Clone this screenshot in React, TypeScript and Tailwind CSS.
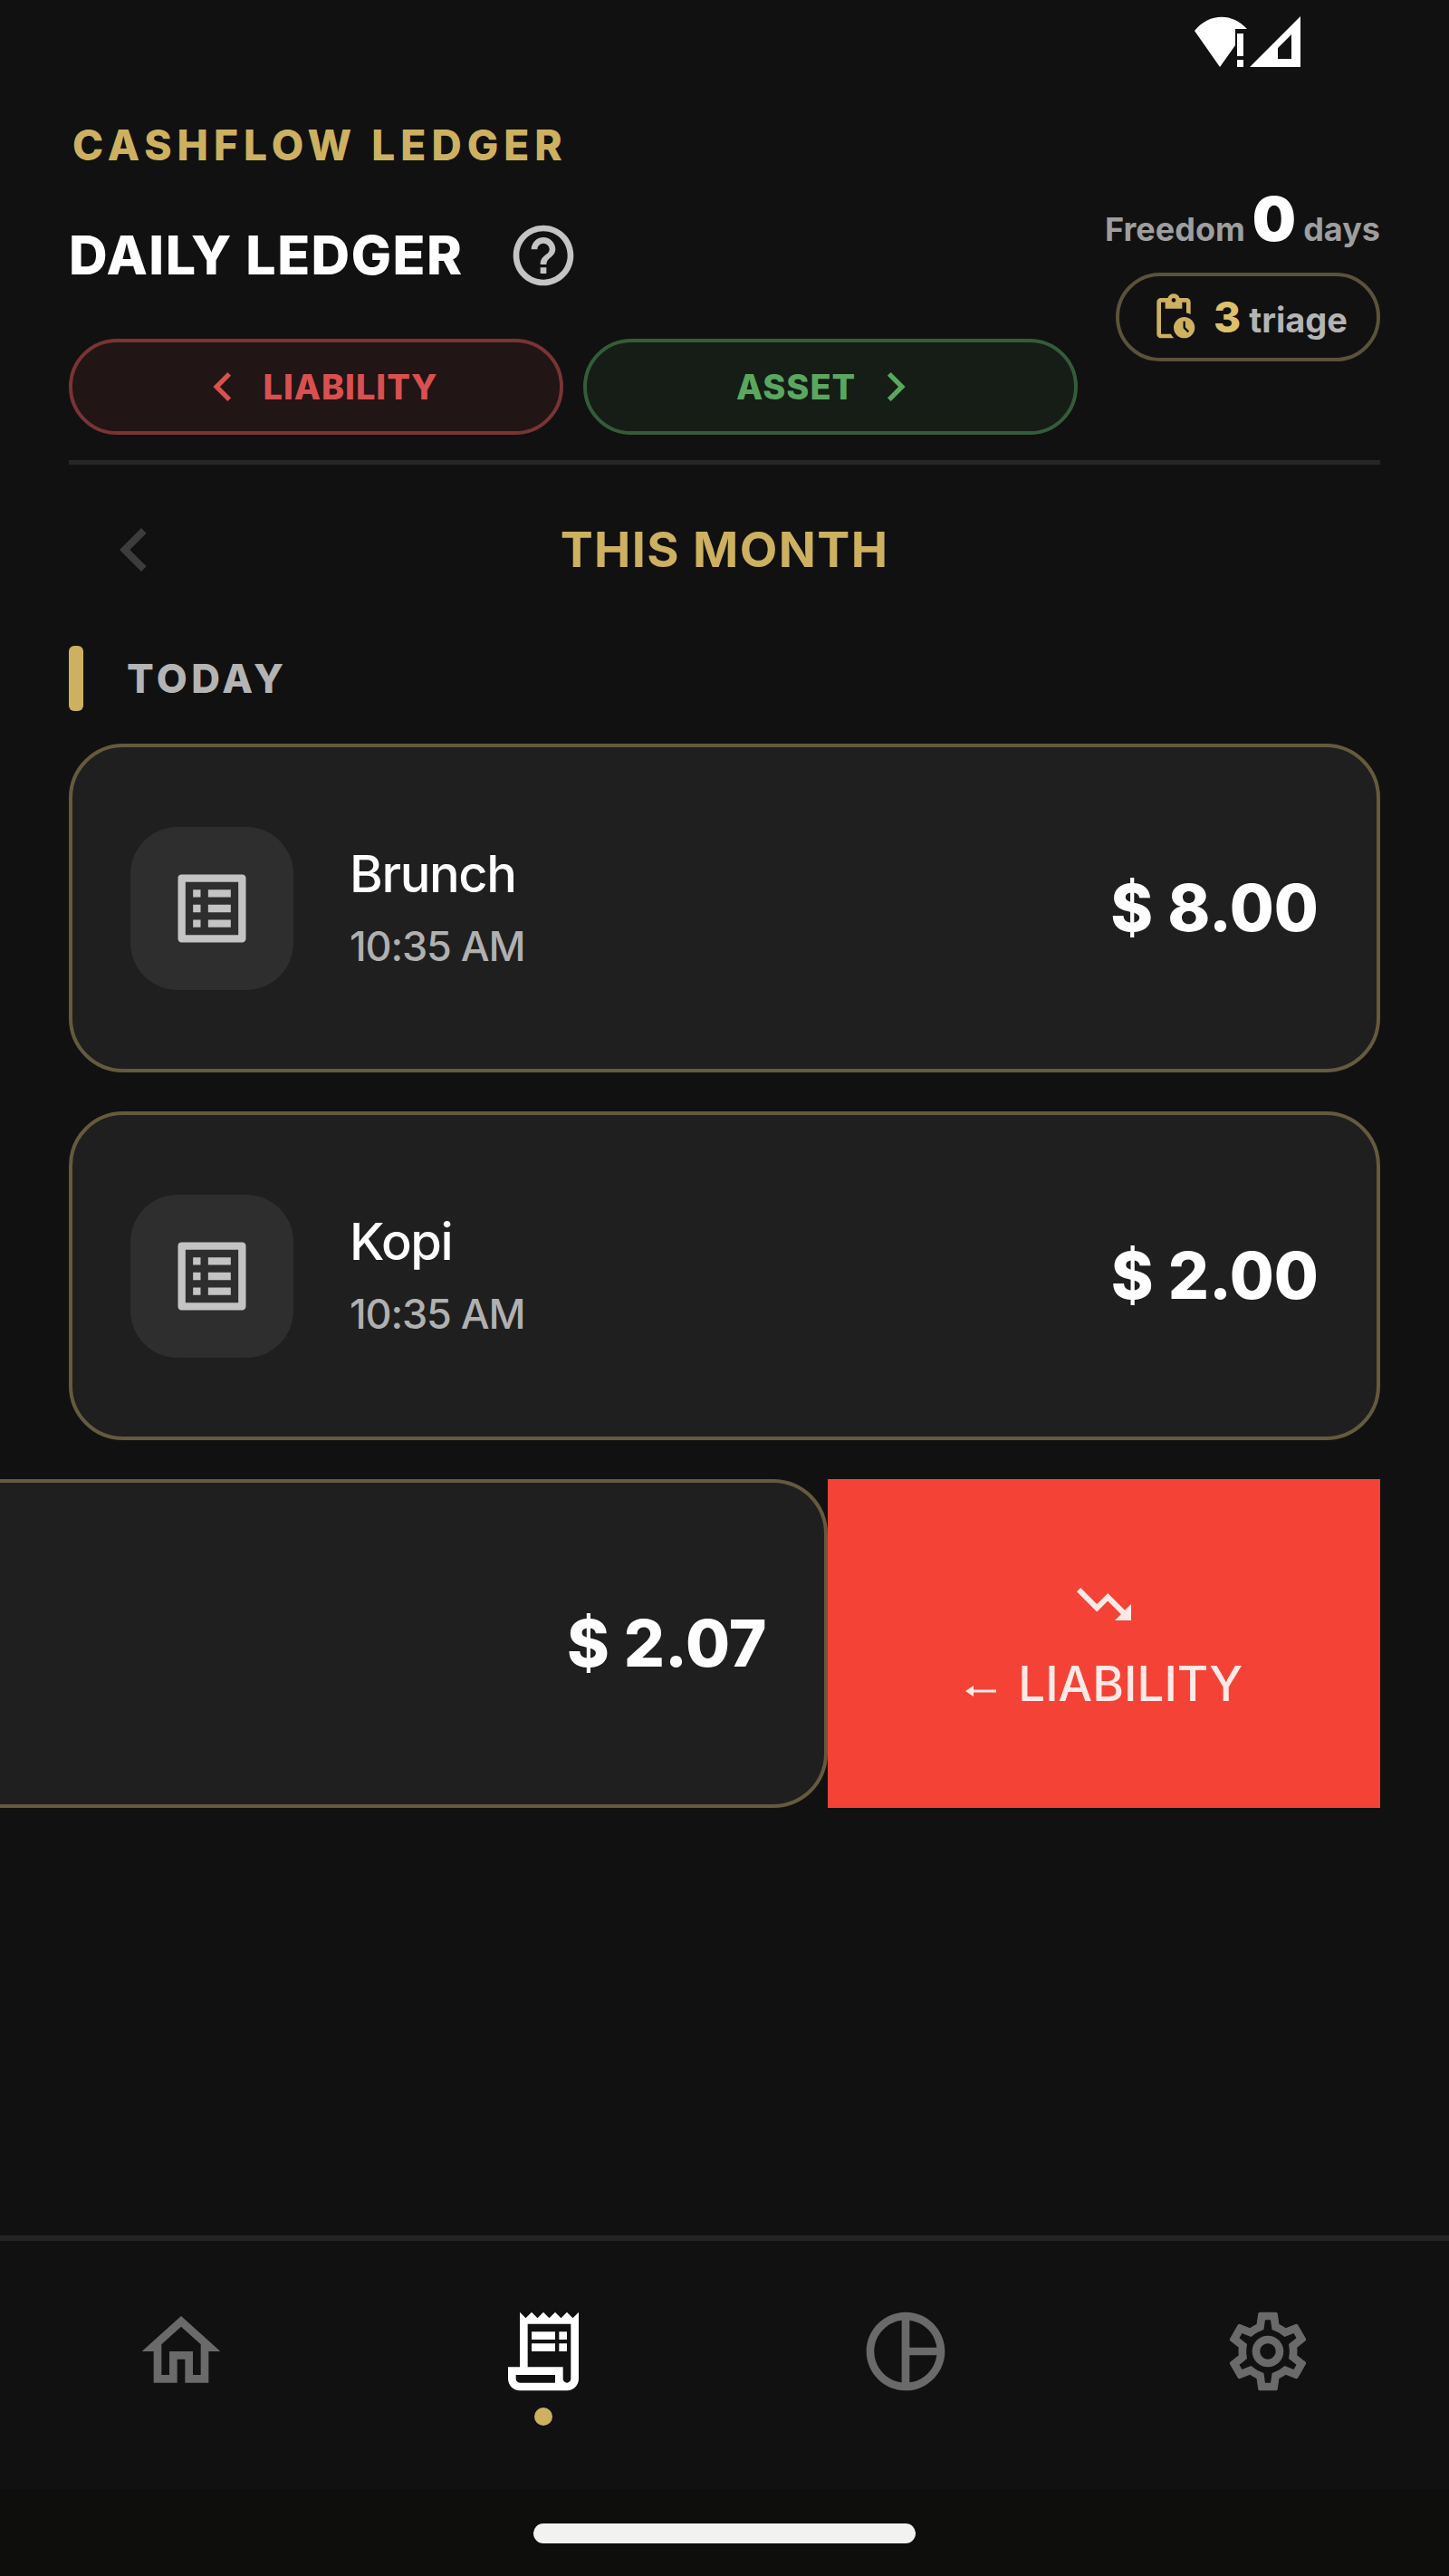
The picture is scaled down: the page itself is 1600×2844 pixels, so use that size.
import {
  MdChevronLeft,
  MdChevronRight,
  MdHelpOutline,
  MdListAlt,
  MdOutlineHome,
  MdOutlinePendingActions,
  MdOutlinePieChartOutline,
  MdOutlineReceiptLong,
  MdOutlineSettings,
  MdTrendingDown,
} from "react-icons/md";

const entries = [
  { name: "Brunch", time: "10:35 AM", amount: "8.00" },
  { name: "Kopi", time: "10:35 AM", amount: "2.00" },
];

const tabs = [
  { label: "Home", icon: MdOutlineHome, active: false },
  { label: "Ledger", icon: MdOutlineReceiptLong, active: true },
  { label: "Reports", icon: MdOutlinePieChartOutline, active: false },
  { label: "Settings", icon: MdOutlineSettings, active: false },
];

export default function App() {
  return (
    <div className="min-h-screen flex flex-col bg-[#111111] text-white font-['Inter',sans-serif] overflow-hidden">
      <StatusBar />

      <header className="mx-19 flex items-center gap-[30px] border-b-[5px] border-[#262626] pb-7">
        <div className="flex-1">
          <p className="pl-1 text-[46px] leading-[56px] font-extrabold tracking-[6px] text-[#cdb160]">CASHFLOW LEDGER</p>
          <div className="mt-[54px] flex items-center gap-12">
            <h1 className="text-[59px] leading-[72px] font-extrabold tracking-wide">DAILY LEDGER</h1>
            <button aria-label="Help" className="text-[#c4c4c4]">
              <MdHelpOutline className="size-20" />
            </button>
          </div>
          <div className="mt-[52px] flex gap-[22px]">
            <button className="flex-1 h-[106px] flex items-center justify-center gap-3 rounded-full border-4 border-[#7a3434] bg-[#211515] text-[38px] font-extrabold tracking-wide text-[#d9504f]">
              <MdChevronLeft className="size-16" />
              LIABILITY
            </button>
            <button className="flex-1 h-[106px] flex items-center justify-center gap-3 rounded-full border-4 border-[#345c3a] bg-[#151d16] text-[38px] font-extrabold tracking-wide text-[#5aa860]">
              ASSET
              <MdChevronRight className="size-16" />
            </button>
          </div>
        </div>

        <div className="flex flex-col items-end gap-2 pb-3">
          <p className="flex items-baseline gap-2 text-[36px] leading-[80px] font-bold text-[#9e9e9e]">
            Freedom
            <span className="text-[68px] font-black text-white">0</span>
            days
          </p>
          <button className="h-[98px] px-8 flex items-center gap-4 rounded-full border-4 border-[#5a523b] text-[38px] font-bold text-[#b4b4b4]">
            <MdOutlinePendingActions className="size-14 text-[#cdb160]" />
            <span>
              <span className="text-[46px] font-extrabold text-[#dcc06a]">3</span> triage
            </span>
          </button>
        </div>
      </header>

      <main className="flex-1 mx-19">
        <div className="mt-[46px] grid grid-cols-[144px_1fr_144px] items-center">
          <button aria-label="Previous month" className="justify-self-center text-[#3c3c3c]">
            <MdChevronLeft className="size-24" />
          </button>
          <h2 className="text-center text-[54px] leading-[72px] font-bold tracking-wide text-[#cdb160]">THIS MONTH</h2>
        </div>

        <div className="mt-[58px] flex items-center gap-12">
          <span className="w-4 h-[72px] rounded-md bg-[#cdb160]" />
          <h3 className="text-[44px] leading-[56px] font-extrabold tracking-widest text-[#b4b4b4]">TODAY</h3>
        </div>

        <ul className="mt-9 flex flex-col gap-[43px]">
          {entries.map((entry) => (
            <li
              key={entry.name}
              className="h-[363px] flex items-center rounded-[60px] border-4 border-[#645a3e] bg-[#1f1f1f] px-16"
            >
              <div className="size-45 flex items-center justify-center rounded-[52px] bg-[#2e2e2e]">
                <MdListAlt className="size-25 text-[#c4c4c4]" />
              </div>
              <div className="ml-[62px] flex-1 pt-1">
                <p className="text-[56px] leading-[72px] font-medium tracking-tight">{entry.name}</p>
                <p className="mt-2 text-[45px] leading-[72px] font-medium tracking-tight text-[#b0b0b0]">{entry.time}</p>
              </div>
              <Amount value={entry.amount} />
            </li>
          ))}

          {/* Entry dragged to the left, action revealed behind it */}
          <li className="-ml-19 flex h-[363px]">
            <div className="flex-1 flex items-center justify-end rounded-r-[60px] border-4 border-l-0 border-[#645a3e] bg-[#1f1f1f] px-16">
              <Amount value="2.07" />
            </div>
            <button className="w-[40%] flex flex-col items-center justify-center gap-5 bg-[#f44336] pb-1 text-[#ffe9e6]">
              <MdTrendingDown className="size-18" />
              <span className="flex items-center gap-6 text-[53px] leading-[64px] font-medium">
                <svg viewBox="0 0 34 14" className="w-[34px] h-[14px] mt-4" fill="currentColor">
                  <path d="M0 7 9 1v4.5h25v3H9V13z" />
                </svg>
                LIABILITY
              </span>
            </button>
          </li>
        </ul>
      </main>

      <nav className="flex h-[280px] border-t-[6px] border-[#242424] pt-[70px]">
        {tabs.map(({ label, icon: Icon, active }) => (
          <a key={label} href="#" aria-label={label} className="flex-1 flex flex-col items-center gap-[10px]">
            <Icon className={active ? "size-26 text-white" : "size-26 text-[#6a6a6a]"} />
            {active && <span className="size-5 rounded-full bg-[#cdb160]" />}
          </a>
        ))}
      </nav>
      <div className="h-[96px] flex justify-center bg-[#0e0e0c] pt-[38px]">
        <div className="w-[422px] h-[22px] rounded-full bg-[#f2f2f0]" />
      </div>
    </div>
  );
}

function StatusBar() {
  return (
    <div className="flex justify-end pt-4 pr-40 pb-[56px]">
      <svg viewBox="0 0 124 60" className="w-31 h-15" fill="#fff">
        <path d="M31 58 3 18C19-2 45-2 61 16H48v18Z" />
        <path d="M50 21h7v25h-7zM50 50h7v8h-7z" />
        <path fillRule="evenodd" d="M64 58 120 2v56zM95 49h15V22L95 37z" />
      </svg>
    </div>
  );
}

function Amount({ value }: { value: string }) {
  return (
    <p className="flex gap-4 text-[71px] leading-none font-extrabold">
      <span>$</span>
      <span>{value}</span>
    </p>
  );
}
